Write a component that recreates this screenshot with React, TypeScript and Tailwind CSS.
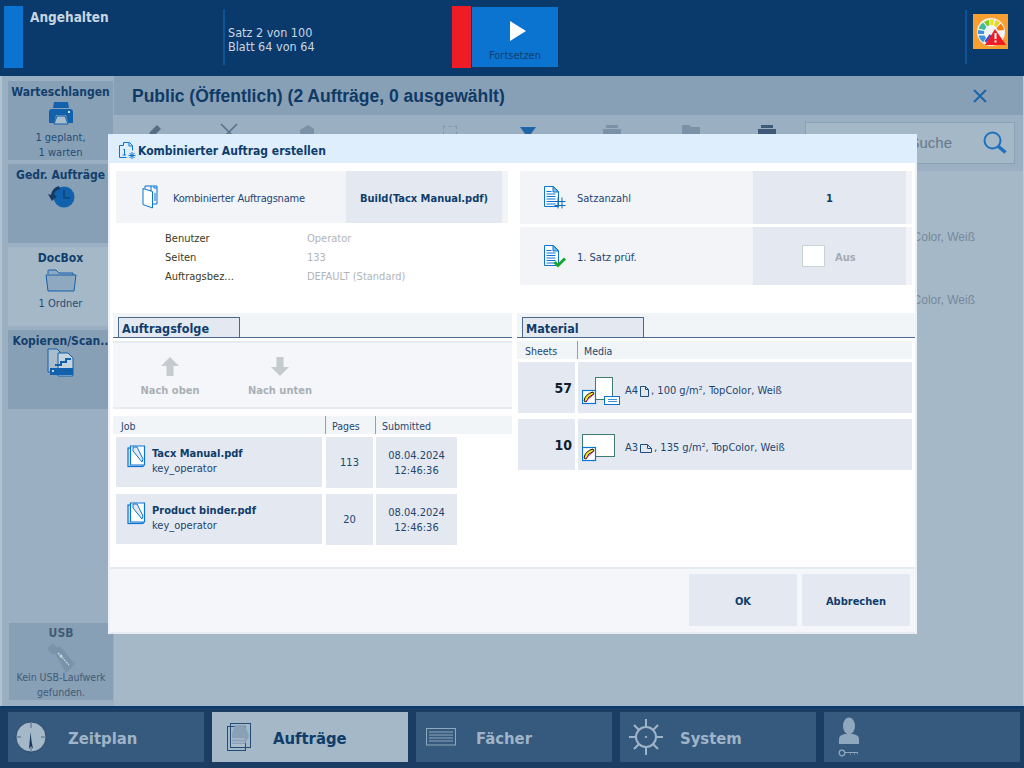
import React from "react";

const Printer = () => (
  <svg width="26" height="26" viewBox="0 0 26 26">
    <path d="M6 1h14l1 6H5z" fill="#1261ad" />
    <path d="M1 11q0-3 3-3h18q3 0 3 3v11h-5l-2-8H8l-2 8H1z" fill="#1261ad" />
    <path d="M9 15h8l3 8H6z" fill="#a9bccb" stroke="#1261ad" />
    <rect x="20" y="10" width="2" height="2" fill="#cfe0ee" />
  </svg>
);
const History = () => (
  <svg width="28" height="26" viewBox="0 0 28 26">
    <circle cx="17" cy="13" r="10.5" fill="#1261ad" />
    <path d="M17 6v8h6" fill="none" stroke="#0a3a6b" strokeWidth="1.2" />
    <path d="M12 2q-7 2-8 9l-3-1 4 7 5-5-3-1q1-5 6-6z" fill="#17395f" />
  </svg>
);
const Folder = () => (
  <svg width="32" height="24" viewBox="0 0 32 24">
    <path d="M3 6V3q0-1 1-1h7l3 3h14v2" fill="#8ea8bf" stroke="#1261ad" />
    <path d="M1 7h30l-2 16H3z" fill="#8ea8bf" stroke="#1261ad" />
  </svg>
);
const CopyScan = () => (
  <svg width="28" height="30" viewBox="0 0 28 30">
    <path d="M1 1h9l3 3v20H1z" fill="#a9bccb" stroke="#1261ad" />
    <path d="M11 5h10l5 5v18H11z" fill="#c6d4df" stroke="#1261ad" />
    <path d="M8 16h5v-3h5v-3h6v2h-4v3h-5v3H8z" fill="#1261ad" />
    <rect x="3" y="20" width="23" height="7" fill="#1261ad" />
    <rect x="5" y="22" width="2" height="2" fill="#c6d4df" />
  </svg>
);
const Usb = () => (
  <svg width="34" height="34" viewBox="0 0 34 34">
    <path d="M3 7l6-6 6 6-6 6z" fill="#7b93a9" />
    <path d="M9 8l7-4 15 18-9 9z" fill="#7b93a9" />
    <path d="M14 11l11 12" stroke="#c9d6e0" strokeWidth="1.3" strokeDasharray="2 1" />
    <circle cx="17" cy="14" r="1.5" fill="#c9d6e0" />
  </svg>
);

const Gauge = () => (
  <svg width="35" height="35" viewBox="0 0 35 35">
    <circle cx="18" cy="18" r="14" fill="#f2f4f4" />
    <path d="M17 5.500a13 13 0 0 1 4 0L20 11h-2.500z" fill="#e7e21f" />
    <path d="M22.500 6a13 13 0 0 1 4.500 2.500L23.500 13 21 11.500z" fill="#ecd51e" />
    <path d="M11 8a13 13 0 0 1 5-2.300l.5 5.500-2 1z" fill="#7ccb1d" />
    <path d="M5.500 14.500a13 13 0 0 1 4.500-6l3.500 4.500-2 3z" fill="#3dbb9b" />
    <path d="M5 20a13 13 0 0 1 .2-4l6 1-.2 3z" fill="#3f8fdc" />
    <path d="M10 28.500a13 13 0 0 1-4.500-7h6l1.500 2.500z" fill="#3f8fdc" />
    <path d="M28 9.500a13 13 0 0 1 3 6.500l-6 .5-1.500-2.500z" fill="#f47a10" />
    <path d="M12.500 28l5-7" stroke="#4c48c4" strokeWidth="2.500" />
    <path d="M22 15L33 31H12z" fill="#ee1c25" />
    <rect x="21.500" y="19" width="2" height="6" fill="#fff" />
    <rect x="21.500" y="26.500" width="2" height="2" fill="#fff" />
  </svg>
);

const TitleIcon = () => (
  <svg width="17" height="17" viewBox="0 0 17 17" fill="none" stroke="#0b74d1">
    <path d="M.5 3.500h4v-3h6l3 3v5M10 1v3h3.500" />
    <path d="M.5 3.500v12h7" />
    <path d="M4.500 8l1-1v6M3.500 13h3.500" />
    <path d="M13 10v7M9.500 13.500h7M10.500 11l5 5M15.500 11l-5 5" />
  </svg>
);
const BookIcon = () => (
  <svg width="17" height="24" viewBox="0 0 17 24" fill="none" stroke="#0b74d1">
    <path d="M1 3.500l9.500 3v16.500L1 19.500z" fill="#fff" />
    <path d="M3 3.500V1h6v5M9 1h6v18h-4" />
    <path d="M12 1v2h3M13 8v8" />
  </svg>
);
const DocLines = ({ children }: { children?: React.ReactNode }) => (
  <svg width="23" height="23" viewBox="0 0 23 23" fill="none" stroke="#0b74d1">
    <path d="M.5 .5h9l5 5v15H.5z" fill="#fff" />
    <path d="M9 .5l5.500 5.500H9z" fill="#8cc3ef" />
    <path d="M2.500 5.500h5M2.500 8h9M2.500 10.500h9M2.500 13h9M2.500 15.500h9M2.500 18h9" />
    {children}
  </svg>
);
const HashIcon = () => (
  <DocLines>
    <path d="M14 11.500v11M18 11.500v11M10.500 15.500h11M10.500 19.500h11" stroke="#1267b7" fill="none" />
  </DocLines>
);
const CheckIcon = () => (
  <DocLines>
    <path d="M10.500 17l3.500 3.500 7-7" stroke="#14a829" strokeWidth="3" fill="none" />
  </DocLines>
);
const JobDoc = () => (
  <svg width="19" height="23" viewBox="0 0 19 23" fill="none" stroke="#0b74d1">
    <rect x="1" y="3" width="15" height="18.500" strokeWidth="1.200" fill="#e4e9f1" />
    <path d="M3.500 1h14v19h-14z" strokeWidth="1.200" fill="#fff" />
    <path d="M6 2v4l9 11 1-3-6-12z" fill="#e4e9f1" />
  </svg>
);
const ColorSwatch = ({ x, y }: { x: number; y: number }) => (
  <g transform={`translate(${x} ${y})`}>
    <rect x=".5" y=".5" width="13" height="13" fill="#fff" stroke="#0b74d1" strokeWidth="1.200" />
    <path d="M2 11q1-7 9-9l1 2q-6 2-8 8z" fill="#f4e61c" stroke="#111" strokeWidth="1" />
    <path d="M3 12l9-8" stroke="#e0198e" strokeWidth="1" />
  </g>
);
const MediaA4 = () => (
  <svg width="40" height="32" viewBox="0 0 40 32">
    <rect x="13.500" y=".5" width="17" height="22" fill="#fff" stroke="#3f7a73" />
    <ColorSwatch x={0} y={13} />
    <rect x="22.500" y="19.500" width="15" height="8" fill="#fff" stroke="#0b74d1" />
    <path d="M26 22.500h9M26 24.500h9" stroke="#0b74d1" strokeWidth=".8" />
  </svg>
);
const MediaA3 = () => (
  <svg width="40" height="32" viewBox="0 0 40 32">
    <rect x=".5" y=".5" width="32" height="22" fill="#fff" stroke="#3f7a73" />
    <ColorSwatch x={0} y={13} />
  </svg>
);
const SheetPortrait = () => (
  <svg width="9" height="11" viewBox="0 0 9 11" fill="none" stroke="#1d4d80">
    <path d="M.5 .5h5l3 3v7h-8zM5.500 .5v3h3" />
  </svg>
);
const SheetLandscape = () => (
  <svg width="12" height="9" viewBox="0 0 12 9" fill="none" stroke="#1d4d80">
    <path d="M.5 .5h7l4 4v4h-11zM7.500 .5v4h4" />
  </svg>
);
const Up = () => (
  <svg width="18" height="19" viewBox="0 0 18 19">
    <path d="M9 0l9 9h-5.500v10h-7V9H0z" fill="#c5cbce" />
  </svg>
);
const Down = () => (
  <svg width="18" height="19" viewBox="0 0 18 19">
    <path d="M9 19L0 10h5.500V0h7v10H18z" fill="#c5cbce" />
  </svg>
);
const Clock = () => (
  <svg width="32" height="32" viewBox="0 0 32 32">
    <circle cx="16" cy="16" r="15" fill="#a5b8c7" stroke="#1d3f66" strokeWidth=".8" />
    <path d="M16 2v5M16 25v5M2 16h4M26 16h4" stroke="#4d6b8a" />
    <path d="M15.500 11l1 9 1.500 8-2-3-2 3z" fill="#17395f" />
  </svg>
);
const Jobs = () => (
  <svg width="24" height="28" viewBox="0 0 24 28" fill="none" stroke="#234d78">
    <rect x=".5" y="3.500" width="18" height="24" />
    <rect x="3.500" y=".5" width="20" height="24" />
    <path d="M8 2l10 0 4 11-4 8H5V10z" fill="#8aa0b6" stroke="none" />
    <path d="M4 16h14M4 19h14M4 22h14" stroke="#b5c5d2" />
  </svg>
);
const Trays = () => (
  <svg width="30" height="18" viewBox="0 0 30 18" fill="none" stroke="#8fa8be">
    <rect x=".5" y=".5" width="29" height="16.500" />
    <path d="M3 4h24M3 7h24M3 10h24M3 13h24" />
  </svg>
);
const Wheel = () => (
  <svg width="34" height="38" viewBox="0 0 34 38" fill="none" stroke="#9fb4c8">
    <circle cx="17" cy="19" r="10" strokeWidth="2" />
    <path d="M17 1v8M17 29v8M0 19h7M27 19h7M5 7l5 5M29 7l-5 5M5 31l5-5M29 31l-5-5" strokeWidth="2" />
    <circle cx="17" cy="19" r=".8" fill="#9fb4c8" />
  </svg>
);
const UserKey = () => (
  <svg width="22" height="40" viewBox="0 0 22 40">
    <ellipse cx="11" cy="9" rx="6" ry="8.500" fill="#8fa8be" />
    <path d="M1 27v-5q0-4 6-5h8q6 1 6 5v5z" fill="#8fa8be" />
    <circle cx="4" cy="36" r="2.800" fill="none" stroke="#8fa8be" strokeWidth="1.300" />
    <path d="M7 35.500h13M12 37h1M16 37h1M19 37h1" stroke="#8fa8be" />
  </svg>
);
const Magnifier = () => (
  <svg width="24" height="24" viewBox="0 0 24 24" fill="none" stroke="#1f71bd">
    <circle cx="9.500" cy="9.500" r="8" strokeWidth="2" />
    <path d="M15 15l7.500 6.500" strokeWidth="3.500" />
  </svg>
);

const SideItem = ({
  title,
  icon,
  lines = [],
  active = false,
}: {
  title: string;
  icon: React.ReactNode;
  lines?: string[];
  active?: boolean;
}) => (
  <div className={`w-[105px] h-[79px] flex flex-col items-center pt-[3px] ${active ? "bg-[#a5b8c7]" : "bg-[#88a0b6]"}`}>
    <div className="text-[12px] leading-[16px] font-bold text-[#123f6d] whitespace-nowrap">{title}</div>
    <div className="h-[26px] flex items-center mt-[1px]">{icon}</div>
    <div className="mt-[3px] flex flex-col items-center">
      {lines.map((l) => (
        <div key={l} className="text-[11px] leading-[15px] text-[#234d78] whitespace-nowrap">
          {l}
        </div>
      ))}
    </div>
  </div>
);

const NavButton = ({
  label,
  icon,
  active = false,
  iconBox,
  textGap,
}: {
  label?: string;
  icon: React.ReactNode;
  active?: boolean;
  iconBox: string;
  textGap: string;
}) => (
  <div className={`w-[196px] h-[50px] flex items-center ${active ? "bg-[#a5b8c7]" : "bg-[#365a7d]"}`}>
    <div className={`flex justify-center ${iconBox}`}>{icon}</div>
    {label && (
      <div className={`text-[16.5px] font-bold mt-[5px] ${textGap} ${active ? "text-[#0f3d6b]" : "text-[#9fb4c8]"}`}>{label}</div>
    )}
  </div>
);

const Detail = ({ k, v }: { k: string; v: string }) => (
  <div className="flex h-[19px] items-center text-[11px]">
    <div className="w-[142px] text-[#3c3a20]">{k}</div>
    <div className="text-[#b0b5ba]">{v}</div>
  </div>
);

const Tab = ({ label, width }: { label: string; width: string }) => (
  <div className="h-[25px] flex items-end bg-[#f2f5f8] border-b border-[#4a6a8a] pl-[5px]">
    <div className={`${width} h-[20px] bg-[#e4e9f1] border border-b-0 border-[#4a6a8a] pl-[3px] text-[12.5px] leading-[21px] font-bold text-[#0f3d6b]`}>
      {label}
    </div>
  </div>
);

const JobRow = ({ name, pages }: { name: string; pages: string }) => (
  <div className="flex ml-[3px] text-[11px] text-[#1d4570]">
    <div className="w-[206px] h-[50px] bg-[#e4e9f1] flex pl-[11px] pt-[8px]">
      <JobDoc />
      <div className="ml-[6px]">
        <div className="text-[11px] leading-[17px] font-bold text-[#0f3d6b] whitespace-nowrap">{name}</div>
        <div className="leading-[14px]">key_operator</div>
      </div>
    </div>
    <div className="ml-[4px] w-[47px] h-[51px] bg-[#e4e9f1] flex items-center justify-center pt-[2px]">{pages}</div>
    <div className="ml-[3px] w-[81px] h-[51px] bg-[#e4e9f1] flex flex-col items-center justify-center leading-[15px]">
      <div>08.04.2024</div>
      <div>12:46:36</div>
    </div>
  </div>
);

const MediaRow = ({
  n,
  thumb,
  size,
  sheet,
  rest,
}: {
  n: string;
  thumb: React.ReactNode;
  size: string;
  sheet: React.ReactNode;
  rest: string;
}) => (
  <div className="flex ml-[1px] h-[51px]">
    <div className="w-[57px] bg-[#e4e9f1] flex items-center justify-end pr-[3px] pt-[2px] text-[14px] font-bold text-[#10202f]">{n}</div>
    <div className="ml-[3px] w-[334px] bg-[#e4e9f1] flex items-center pl-[4px]">
      <div className="w-[43px] mt-[11px]">{thumb}</div>
      <div className="flex items-center text-[11px] text-[#1d4570] mt-[8px]">
        <span>{size}</span>
        <span className="mx-[2px]">{sheet}</span>
        <span>{rest}</span>
      </div>
    </div>
  </div>
);

export default function App() {
  return (
    <div className="relative w-[1024px] h-[768px] overflow-hidden flex flex-col font-['DejaVu_Sans_Condensed','Noto_Sans',sans-serif]">
      {/* Top status bar */}
      <header className="h-[76px] bg-[#0a3a6b] flex items-start">
        <div className="ml-[4px] mt-[6px] w-[19px] h-[62px] bg-[#0b74d1]" />
        <div className="ml-[7px] mt-[8px] w-[193px] text-[13.5px] leading-[18px] font-bold text-[#c9d6e2]">Angehalten</div>
        <div className="mt-[9px] w-[2px] h-[56px] bg-[#0f5596]" />
        <div className="ml-[3px] mt-[26px] w-[224px] text-[12.5px] leading-[14px] text-[#c9d6e2]">
          <div>Satz 2 von 100</div>
          <div>Blatt 64 von 64</div>
        </div>
        <div className="mt-[6px] w-[19px] h-[62px] bg-[#ee1c25]" />
        <div className="ml-[1px] mt-[7px] w-[86px] h-[60px] bg-[#0b74d1] flex flex-col items-center">
          <svg width="16" height="20" viewBox="0 0 16 20" className="mt-[14px] ml-[5px]">
            <path d="M0 0l16 10L0 20z" fill="#fff" />
          </svg>
          <div className="mt-[7px] text-[11px] leading-[15px] text-[#123f6d]">Fortsetzen</div>
        </div>
        <div className="ml-[407px] mt-[10px] w-[2px] h-[54px] bg-[#0f5596]" />
        <div className="ml-[6px] mt-[14px] w-[35px] h-[35px] bg-[#f99f2f]">
          <Gauge />
        </div>
      </header>

      {/* Middle */}
      <div className="h-[630px] flex">
        <aside className="w-[114px] bg-[#9aafc1] border-l-2 border-[#b0c1cf] pl-[6px] pt-[5px] flex flex-col gap-[4px]">
          <SideItem title="Warteschlangen" icon={<Printer />} lines={["1 geplant,", "1 warten"]} />
          <SideItem title="Gedr. Aufträge" icon={<History />} />
          <SideItem title="DocBox" icon={<Folder />} lines={["1 Ordner"]} active />
          <SideItem title="Kopieren/Scan.." icon={<CopyScan />} />
          <div className="mt-auto mb-[6px] ml-[1px] w-[104px] h-[77px] bg-[#88a0b6] flex flex-col items-center pt-[2px]">
            <div className="text-[12px] leading-[17px] font-bold text-[#3f5b76]">USB</div>
            <Usb />
            <div className="-mt-[6px] text-[10.5px] leading-[15px] text-[#3f5b76] whitespace-nowrap text-center">
              Kein USB-Laufwerk
              <br />
              gefunden.
            </div>
          </div>
        </aside>
        <main className="flex-1 bg-[#a5b8c7] border-r border-[#bccad6] flex flex-col">
          <div className="h-[39px] bg-[#88a0b6] flex items-center justify-between pl-[18px] pr-[35px]">
            <div className="font-['Liberation_Sans',sans-serif] text-[17.5px] mt-[1px] font-bold text-[#0f3a66]">
              Public (Öffentlich) (2 Aufträge, 0 ausgewählt)
            </div>
            <svg width="16" height="16" viewBox="0 0 16 16">
              <path d="M2 2l12 12M14 2L2 14" stroke="#1f66a8" strokeWidth="2" />
            </svg>
          </div>
          <div className="h-[56px] bg-[#9aafc1] flex items-start pt-[7px]">
            <svg width="18" height="18" viewBox="0 0 18 18" className="ml-[31px] mt-[1px]">
              <path d="M3 15l2-6L12 2l4 4-7 7z" fill="#566d83" />
            </svg>
            <svg width="18" height="18" viewBox="0 0 18 18" className="ml-[57px] mt-[1px]">
              <path d="M1 1l16 16M17 1L1 17" stroke="#566d83" strokeWidth="1.500" />
            </svg>
            <svg width="16" height="16" viewBox="0 0 16 16" className="ml-[61px] mt-[2px]">
              <path d="M1 6l8-5 6 4v5l-8 5-6-4z" fill="#7a91a7" />
            </svg>
            <div className="ml-[128px] mt-[4px] w-[14px] h-[14px] border border-dashed border-[#8097ac]" />
            <svg width="16" height="12" viewBox="0 0 16 12" className="ml-[63px] mt-[5px]">
              <path d="M0 0h16L8 11z" fill="#1f66a8" />
            </svg>
            <svg width="18" height="14" viewBox="0 0 18 14" className="ml-[67px] mt-[3px]">
              <path d="M3 3h12V0H3zM0 4h18v10H0z" fill="#7a91a7" />
            </svg>
            <svg width="18" height="14" viewBox="0 0 18 14" className="ml-[61px] mt-[3px]">
              <path d="M0 0h7l2 2h9v12H0z" fill="#7a91a7" />
            </svg>
            <svg width="18" height="14" viewBox="0 0 18 14" className="ml-[58px] mt-[3px]">
              <path d="M3 3h12V0H3zM0 4h18v10H0z" fill="#3e5a76" />
            </svg>
            <div className="ml-[29px] w-[210px] h-[42px] bg-[#a5b8c7] border border-[#8aa0b5] flex items-center justify-end pr-[7px]">
              <span className="font-['Liberation_Sans',sans-serif] text-[15px] text-[#66798c] mr-[31px]">Suche</span>
              <Magnifier />
            </div>
          </div>
          <div className="flex flex-col items-end pr-[48px] pt-[58px] gap-[46px] font-['Liberation_Sans',sans-serif] text-[12px] leading-[17px] text-[#75899c]">
            <div>TopColor, Weiß</div>
            <div>TopColor, Weiß</div>
          </div>
        </main>
      </div>

      {/* Bottom nav */}
      <nav className="h-[62px] bg-[#1b3d63] border-t-2 border-[#0a3a6b] pt-[4px] pl-[8px] flex gap-[8px]">
        <NavButton label="Zeitplan" icon={<Clock />} iconBox="w-[44px] ml-[1px]" textGap="ml-[15px]" />
        <NavButton label="Aufträge" icon={<Jobs />} active iconBox="w-[24px] ml-[15px]" textGap="ml-[22px]" />
        <NavButton label="Fächer" icon={<Trays />} iconBox="w-[30px] ml-[10px]" textGap="ml-[20px]" />
        <NavButton label="System" icon={<Wheel />} iconBox="w-[34px] ml-[9px]" textGap="ml-[17px]" />
        <NavButton icon={<UserKey />} iconBox="w-[22px] ml-[14px]" textGap="" />
      </nav>

      {/* Modal dialog */}
      <div className="absolute left-[108px] top-[134px] w-[809px] h-[500px] flex flex-col bg-white">
        <div className="h-[29px] bg-[#deeefc] flex items-center pl-[11px] pt-[4px] shrink-0">
          <TitleIcon />
          <div className="ml-[2px] text-[12px] font-bold text-[#0f3d6b]">Kombinierter Auftrag erstellen</div>
        </div>
        <div className="flex-1 border-x-2 border-[#eef2f6] flex flex-col">
          <div className="h-[150px] flex pt-[8px] shrink-0">
            <div className="ml-[6px] w-[392px]">
              <div className="h-[52px] bg-[#f2f4f8] flex">
                <div className="w-[230px] flex items-center pl-[26px]">
                  <BookIcon />
                  <div className="ml-[14px] mt-[4px] text-[11px] tracking-[-0.2px] text-[#1d4570] whitespace-nowrap">Kombinierter Auftragsname</div>
                </div>
                <div className="w-[156px] bg-[#e4e9f1] flex items-center justify-center pt-[4px] text-[11px] font-bold text-[#0f3d6b]">
                  Build(Tacx Manual.pdf)
                </div>
              </div>
              <div className="pl-[49px] pt-[7px]">
                <Detail k="Benutzer" v="Operator" />
                <Detail k="Seiten" v="133" />
                <Detail k="Auftragsbez..." v="DEFAULT (Standard)" />
              </div>
            </div>
            <div className="ml-[12px] w-[392px] flex flex-col gap-[3px]">
              <div className="h-[53px] bg-[#f2f4f8] flex">
                <div className="w-[233px] flex items-center pl-[24px]">
                  <HashIcon />
                  <div className="ml-[10px] mt-[4px] text-[11px] text-[#1d4570]">Satzanzahl</div>
                </div>
                <div className="w-[153px] bg-[#e4e9f1] flex items-center justify-center pt-[4px] text-[11px] font-bold text-[#0f3d6b]">1</div>
              </div>
              <div className="h-[58px] bg-[#f2f4f8] flex">
                <div className="w-[233px] flex items-center pl-[24px]">
                  <CheckIcon />
                  <div className="ml-[10px] mt-[4px] text-[11px] text-[#1d4570]">1. Satz prüf.</div>
                </div>
                <div className="w-[153px] bg-[#e4e9f1] flex items-center pl-[49px]">
                  <div className="w-[23px] h-[22px] -mt-[1px] bg-white border border-[#c8d2d6]" />
                  <div className="ml-[10px] mt-[4px] text-[11px] font-bold text-[#a3acb3]">Aus</div>
                </div>
              </div>
            </div>
          </div>

          <div className="flex-1 flex">
            <div className="ml-[3px] w-[399px]">
              <Tab label="Auftragsfolge" width="w-[122px]" />
              <div className="mt-[3px] h-[68px] bg-[#f4f6f9] border-y-2 border-[#e6ebf1] flex">
                <div className="w-[114px] flex flex-col items-center pt-[14px]">
                  <Up />
                  <div className="mt-[7px] text-[11px] font-bold text-[#a9b0b5]">Nach oben</div>
                </div>
                <div className="w-[106px] flex flex-col items-center pt-[14px]">
                  <Down />
                  <div className="mt-[7px] text-[11px] font-bold text-[#a9b0b5]">Nach unten</div>
                </div>
              </div>
              <div className="mt-[7px] h-[18px] bg-[#f2f5f8] flex text-[10.5px] leading-[20px] text-[#1d4570]">
                <div className="w-[213px] pl-[8px] border-r border-[#90a0ae]">Job</div>
                <div className="w-[50px] pl-[6px] border-r border-[#90a0ae]">Pages</div>
                <div className="pl-[6px]">Submitted</div>
              </div>
              <div className="mt-[3px] flex flex-col gap-[6px]">
                <JobRow name="Tacx Manual.pdf" pages="113" />
                <JobRow name="Product binder.pdf" pages="20" />
              </div>
            </div>
            <div className="ml-[5px] w-[398px]">
              <Tab label="Material" width="w-[122px]" />
              <div className="mt-[3px] h-[18px] w-[395px] bg-[#f2f5f8] flex text-[10.5px] leading-[20px] text-[#1d4570]">
                <div className="w-[61px] pl-[8px] border-r border-[#90a0ae]">Sheets</div>
                <div className="pl-[6px]">Media</div>
              </div>
              <div className="mt-[3px] flex flex-col gap-[6px]">
                <MediaRow n="57" thumb={<MediaA4 />} size="A4" sheet={<SheetPortrait />} rest=", 100 g/m², TopColor, Weiß" />
                <MediaRow n="10" thumb={<MediaA3 />} size="A3" sheet={<SheetLandscape />} rest=", 135 g/m², TopColor, Weiß" />
              </div>
            </div>
          </div>

          <div className="h-[67px] shrink-0 bg-[#f4f6f9] border-y-2 border-[#e6ebf1] flex justify-end items-start pt-[5px] pr-[5px] gap-[5px]">
            <div className="w-[108px] h-[52px] bg-[#e4e9f1] flex items-center justify-center pt-[4px] text-[11px] font-bold text-[#0f3d6b]">OK</div>
            <div className="w-[108px] h-[52px] bg-[#e4e9f1] flex items-center justify-center pt-[4px] text-[11px] font-bold text-[#0f3d6b]">Abbrechen</div>
          </div>
        </div>
      </div>
    </div>
  );
}
